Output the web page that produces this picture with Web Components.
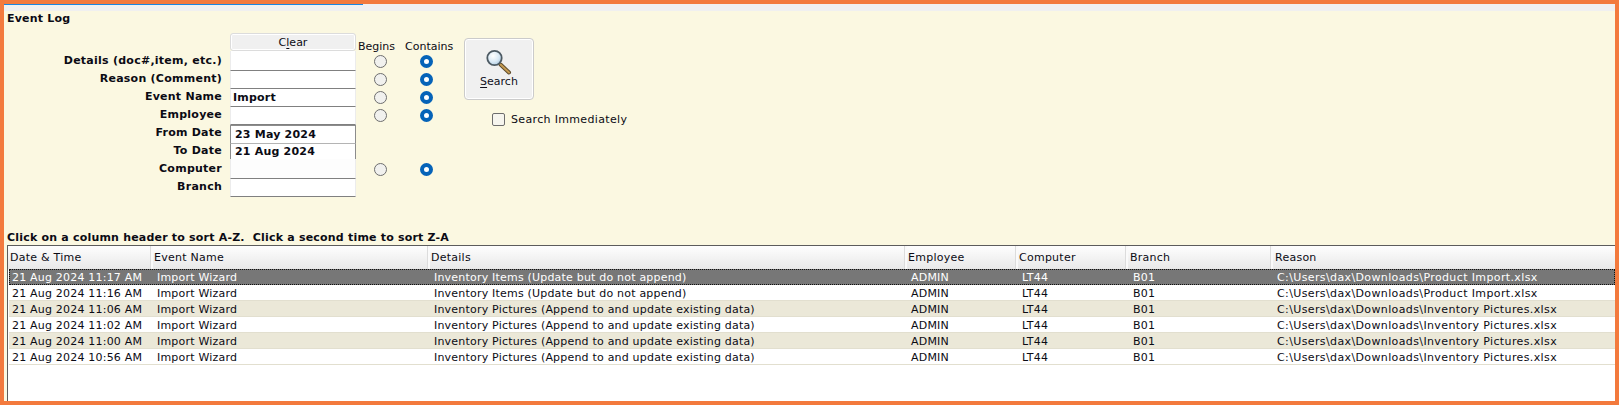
<!DOCTYPE html>
<html>
<head>
<meta charset="utf-8">
<title>Event Log</title>
<style>
    html, body { margin: 0; padding: 0; }
    body { font: 11px/14px "DejaVu Sans", Verdana, sans-serif; color: #0b0b14; }
</style>
</head>
<body>
<event-log-page></event-log-page>
<script>
class TextField extends HTMLElement {
    constructor() {
        super();
        this.attachShadow({ mode: 'open' });
        this.shadowRoot.innerHTML = `
            <style>
                :host {
                    display: flex;
                    align-items: center;
                    box-sizing: border-box;
                    width: 126px;
                    background: #fff;
                    border-bottom: 1px solid #808080;
                    border-left: 1px solid #ececec;
                    border-right: 1px solid #ececec;
                    padding-left: 2px;
                    font-weight: bold;
                    letter-spacing: 0.2px;
                    overflow: hidden;
                }
                :host([date]) {
                    padding-left: 4px;
                    border-left-color: #8c8c8c;
                    border-right-color: #8c8c8c;
                }
            </style>
            <slot></slot>`;
    }
}

class RadioMark extends HTMLElement {
    constructor() {
        super();
        this.attachShadow({ mode: 'open' });
        this.shadowRoot.innerHTML = `
            <style>
                :host {
                    display: block;
                    box-sizing: border-box;
                    width: 13px;
                    height: 13px;
                    border-radius: 50%;
                    border: 1px solid #6e6e6e;
                    background: #f1f1ee;
                    justify-self: center;
                    align-self: center;
                }
                :host([checked]) {
                    border: 4.5px solid #0563b8;
                    background: #fff;
                }
            </style>`;
    }
}

class SearchButton extends HTMLElement {
    constructor() {
        super();
        this.attachShadow({ mode: 'open' });
        this.shadowRoot.innerHTML = `
            <style>
                :host {
                    display: flex;
                    flex-direction: column;
                    align-items: center;
                    box-sizing: border-box;
                    width: 70px;
                    height: 62px;
                    padding-top: 10px;
                    background: #f0f0f0;
                    border: 1px solid #cbcbcb;
                    box-shadow: inset 0 0 0 1px #fff;
                    border-radius: 4px;
                    color: #10101c;
                }
                svg { display: block; margin-left: -2px; }
                u { text-underline-offset: 2px; }
            </style>
            <svg width="28" height="26" viewBox="0 0 28 26">
                <defs>
                    <radialGradient id="lens" cx="0.4" cy="0.35" r="0.7">
                        <stop offset="0" stop-color="#ffffff"/>
                        <stop offset="0.6" stop-color="#d9e9f5"/>
                        <stop offset="1" stop-color="#a9c6dc"/>
                    </radialGradient>
                </defs>
                <path d="M16.5 15.5 L25 23.5" stroke="#5d4a2a" stroke-width="4" stroke-linecap="round"/>
                <path d="M16.5 15.5 L25 23.5" stroke="#c49a52" stroke-width="2" stroke-linecap="round"/>
                <circle cx="10.5" cy="9" r="7.2" fill="url(#lens)" stroke="#4d5a63" stroke-width="1.8"/>
            </svg>
            <div><u>S</u>earch</div>`;
    }
}

class LogRow extends HTMLElement {
    constructor() {
        super();
        this.attachShadow({ mode: 'open' });
        this.shadowRoot.innerHTML = `
            <style>
                :host {
                    display: grid;
                    grid-template-columns: 143px 277px 477px 111px 111px 144px 1fr;
                    box-sizing: border-box;
                    height: 16px;
                    margin-left: 1px;
                    line-height: 17px;
                    letter-spacing: 0.2px;
                    background: #fff;
                    border-bottom: 1px solid #e2dfcf;
                    white-space: nowrap;
                }
                :host([alt]) { background: #ebe8d8; }
                :host([selected]) {
                    background: #777;
                    color: #fff;
                    outline: 1px dotted #111;
                    outline-offset: -1px;
                    border-bottom-color: #777;
                }
                ::slotted(span) { padding-left: 5px; overflow: hidden; }
                ::slotted(span:first-child) { padding-left: 3px; }
                ::slotted(span:last-child) { letter-spacing: 0.38px; }
            </style>
            <slot></slot>`;
    }
}

class LogHeader extends HTMLElement {
    constructor() {
        super();
        this.attachShadow({ mode: 'open' });
        this.shadowRoot.innerHTML = `
            <style>
                :host {
                    display: grid;
                    grid-template-columns: 145px 277px 477px 111px 110px 145px 1fr;
                    height: 22px;
                    margin-bottom: 1px;
                    line-height: 23px;
                    letter-spacing: 0.25px;
                }
                ::slotted(span) {
                    box-sizing: border-box;
                    padding-left: 1px;
                    background: linear-gradient(#fefefe, #f4f4f4 45%, #e9e9e9);
                    border-right: 2px solid #fafafa;
                    box-shadow: inset -1px 0 0 #dcdcdc;
                }
                ::slotted(span:first-child) { padding-left: 2px; }
                ::slotted(.late) { padding-left: 2px; }
                ::slotted(span:last-child) { border-right: 0; box-shadow: none; }
            </style>
            <slot></slot>`;
    }
}

class LogTable extends HTMLElement {
    constructor() {
        super();
        this.attachShadow({ mode: 'open' });
        this.shadowRoot.innerHTML = `
            <style>
                :host {
                    display: block;
                    flex: 1;
                    background: #fff;
                    border-top: 1px solid #5c5c5c;
                    border-left: 1px solid #5c5c5c;
                    overflow: hidden;
                }
            </style>
            <log-header>
                <span>Date &amp; Time</span><span>Event Name</span><span>Details</span><span>Employee</span><span>Computer</span><span class="late">Branch</span><span class="late">Reason</span>
            </log-header>
            <div id="rows"></div>`;
        const rows = [
            ['21 Aug 2024 11:17 AM', 'Inventory Items (Update but do not append)', 'Product Import.xlsx'],
            ['21 Aug 2024 11:16 AM', 'Inventory Items (Update but do not append)', 'Product Import.xlsx'],
            ['21 Aug 2024 11:06 AM', 'Inventory Pictures (Append to and update existing data)', 'Inventory Pictures.xlsx'],
            ['21 Aug 2024 11:02 AM', 'Inventory Pictures (Append to and update existing data)', 'Inventory Pictures.xlsx'],
            ['21 Aug 2024 11:00 AM', 'Inventory Pictures (Append to and update existing data)', 'Inventory Pictures.xlsx'],
            ['21 Aug 2024 10:56 AM', 'Inventory Pictures (Append to and update existing data)', 'Inventory Pictures.xlsx']
        ];
        const holder = this.shadowRoot.getElementById('rows');
        rows.forEach((row, i) => {
            const el = document.createElement('log-row');
            if (i === 0) el.setAttribute('selected', '');
            if (i === 2 || i === 4) el.setAttribute('alt', '');
            const cells = [row[0], 'Import Wizard', row[1], 'ADMIN', 'LT44', 'B01', 'C:\\Users\\dax\\Downloads\\' + row[2]];
            cells.forEach(text => {
                const span = document.createElement('span');
                span.textContent = text;
                el.appendChild(span);
            });
            holder.appendChild(el);
        });
    }
}

class SearchForm extends HTMLElement {
    constructor() {
        super();
        this.attachShadow({ mode: 'open' });
        this.shadowRoot.innerHTML = `
            <style>
                :host { display: flex; margin-top: 7px; height: 164px; }
                .labels {
                    width: 215px;
                    padding-top: 19px;
                    font-weight: bold;
                    text-align: right;
                    line-height: 18px;
                    letter-spacing: 0.25px;
                    margin-right: 8px;
                }
                .fields { display: flex; flex-direction: column; width: 126px; }
                .clear {
                    box-sizing: border-box;
                    height: 18px;
                    line-height: 18px;
                    text-align: center;
                    background: #f0f0f0;
                    border: 1px solid #dcdcdc;
                    box-shadow: inset 0 0 0 1px #fff;
                    border-radius: 3px;
                }
                .clear u { text-underline-offset: 2px; }
                .radios {
                    display: grid;
                    grid-template-columns: 48px 46px;
                    grid-template-rows: 19px repeat(8, 18px);
                }
                .radios span { align-self: end; margin-left: 2px; line-height: 15px; height: 13px; white-space: nowrap; }
                .radios span + span { margin-left: 1px; }
                .radios radio-mark[checked] { margin-right: 2px; }
                .wide { grid-row: 8; }
                .side { display: flex; flex-direction: column; margin-left: 14px; padding-top: 5px; }
                .immediate {
                    display: flex;
                    align-items: center;
                    margin: 13px 0 0 28px;
                    letter-spacing: 0.34px;
                    white-space: nowrap;
                }
                .box {
                    box-sizing: border-box;
                    width: 13px;
                    height: 13px;
                    margin: -1px 6px 0 0;
                    background: #f6f5ee;
                    border: 1px solid #6d6d6d;
                    border-radius: 2px;
                }
            </style>
            <div class="labels">
                <div>Details (doc#,item, etc.)</div>
                <div>Reason (Comment)</div>
                <div>Event Name</div>
                <div>Employee</div>
                <div>From Date</div>
                <div>To Date</div>
                <div>Computer</div>
                <div>Branch</div>
            </div>
            <div class="fields">
                <div class="clear">C<u>l</u>ear</div>
                <text-field style="height:20px"></text-field>
                <text-field style="height:18px"></text-field>
                <text-field style="height:18px">Import</text-field>
                <text-field style="height:18px"></text-field>
                <text-field date style="height:19px;border-top:1px solid #8c8c8c;border-bottom-color:#b4b4b4">23 May 2024</text-field>
                <text-field date style="height:15px;border-bottom:0">21 Aug 2024</text-field>
                <text-field style="height:20px;background:#fdfdfd"></text-field>
                <text-field style="height:18px"></text-field>
            </div>
            <div class="radios">
                <span>Begins</span><span>Contains</span>
                <radio-mark></radio-mark><radio-mark checked></radio-mark>
                <radio-mark></radio-mark><radio-mark checked></radio-mark>
                <radio-mark></radio-mark><radio-mark checked></radio-mark>
                <radio-mark></radio-mark><radio-mark checked></radio-mark>
                <radio-mark class="wide"></radio-mark><radio-mark class="wide" checked></radio-mark>
            </div>
            <div class="side">
                <search-button></search-button>
                <div class="immediate"><div class="box"></div>Search Immediately</div>
            </div>`;
    }
}

class EventLogPage extends HTMLElement {
    constructor() {
        super();
        this.attachShadow({ mode: 'open' });
        this.shadowRoot.innerHTML = `
            <style>
                :host {
                    display: flex;
                    flex-direction: column;
                    box-sizing: border-box;
                    height: 405px;
                    border: 4px solid #f37a3d;
                    background: #f0f0f0;
                }
                .strip { height: 7px; flex: none; }
                .strip div { width: 359px; height: 1px; background: #1a86e0; }
                .panel {
                    flex: 1;
                    display: flex;
                    flex-direction: column;
                    min-height: 0;
                    padding-left: 3px;
                    background: #fbf8e1;
                    font-weight: normal;
                }
                .title { font-weight: bold; letter-spacing: 0.2px; padding-top: 1px; }
                .hint {
                    font-weight: bold;
                    letter-spacing: 0.2px;
                    white-space: pre;
                    margin-top: 33px;
                    padding-top: 1px;
                }
            </style>
            <div class="strip"><div></div></div>
            <div class="panel">
                <div class="title">Event Log</div>
                <search-form></search-form>
                <div class="hint">Click on a column header to sort A-Z.  Click a second time to sort Z-A</div>
                <log-table></log-table>
            </div>`;
    }
}

customElements.define('text-field', TextField);
customElements.define('radio-mark', RadioMark);
customElements.define('search-button', SearchButton);
customElements.define('log-row', LogRow);
customElements.define('log-header', LogHeader);
customElements.define('log-table', LogTable);
customElements.define('search-form', SearchForm);
customElements.define('event-log-page', EventLogPage);
</script>
</body>
</html>
